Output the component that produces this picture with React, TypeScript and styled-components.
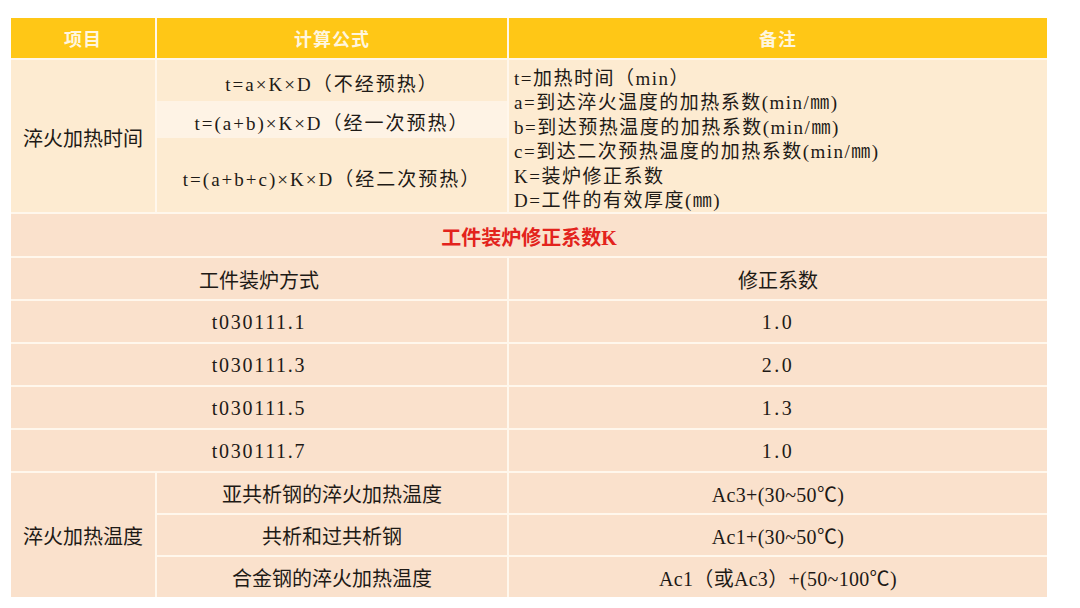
import { Fragment } from "react";
import styled, { createGlobalStyle } from "styled-components";

const GlobalStyle = createGlobalStyle`
  html, body {
    margin: 0;
    padding: 0;
    background: #ffffff;
    overflow: hidden;
  }
  body {
    font-family: "Liberation Serif", "Noto Sans CJK SC", serif;
    color: #1e1a16;
  }
`;

const Page = styled.div`
  width: 1080px;
  height: 608px;
  padding: 18px 33px 0 11px;
  box-sizing: border-box;
`;

const Table = styled.div`
  display: grid;
  grid-template-columns: 144px 350px 1fr;
  grid-template-rows: 40px 152px 42px 41px 41px 41px 41px 41px 40px 40px 40px;
  gap: 2px;
  background: #fff7ec;
`;

const Head = styled.div`
  background: #ffc716;
  color: #fff6df;
  font-weight: 700;
  font-size: 18px;
  display: flex;
  align-items: center;
  justify-content: center;
  letter-spacing: 1px;
`;

const Cell = styled.div<{
  $tone?: "cream" | "peach";
  $span?: string;
  $rows?: string;
  $spacing?: number;
  $pad?: number;
}>`
  background: ${(p) => (p.$tone === "cream" ? "#fdebd1" : "#fae1cc")};
  grid-column: ${(p) => p.$span || "auto"};
  grid-row: ${(p) => p.$rows || "auto"};
  display: flex;
  align-items: center;
  justify-content: center;
  font-size: 20px;
  letter-spacing: ${(p) => p.$spacing ?? 0}px;
  padding-top: ${(p) => p.$pad ?? 2}px;
  box-sizing: border-box;
`;

const Formulas = styled.div`
  background: #fdebd1;
  display: flex;
  flex-direction: column;
`;

const Formula = styled.div<{ $h: number; $light?: boolean }>`
  height: ${(p) => p.$h}px;
  background: ${(p) => (p.$light ? "#fef3e5" : "transparent")};
  display: flex;
  align-items: center;
  justify-content: center;
  font-size: 19px;
  letter-spacing: 2px;
  padding-top: 4px;
  box-sizing: border-box;
`;

const Notes = styled.div`
  background: #fdebd1;
  padding: 7px 0 0 5px;
  font-size: 19px;
  line-height: 24.4px;
  letter-spacing: 1.5px;
  display: flex;
  flex-direction: column;
`;

const Title = styled(Cell)`
  color: #e3231c;
  font-weight: 700;
`;

const kRows = [
  ["t030111.1", "1.0"],
  ["t030111.3", "2.0"],
  ["t030111.5", "1.3"],
  ["t030111.7", "1.0"],
];

const tempRows = [
  ["亚共析钢的淬火加热温度", "Ac3+(30~50℃)"],
  ["共析和过共析钢", "Ac1+(30~50℃)"],
  ["合金钢的淬火加热温度", "Ac1（或Ac3）+(50~100℃)"],
];

const notes = [
  "t=加热时间（min）",
  "a=到达淬火温度的加热系数(min/㎜)",
  "b=到达预热温度的加热系数(min/㎜)",
  "c=到达二次预热温度的加热系数(min/㎜)",
  "K=装炉修正系数",
  "D=工件的有效厚度(㎜)",
];

export default function App() {
  return (
    <>
      <GlobalStyle />
      <Page>
        <Table>
          <Head>项目</Head>
          <Head>计算公式</Head>
          <Head>备注</Head>

          <Cell $tone="cream">淬火加热时间</Cell>
          <Formulas>
            <Formula $h={41}>t=a×K×D（不经预热）</Formula>
            <Formula $h={37} $light>t=(a+b)×K×D（经一次预热）</Formula>
            <Formula $h={74}>t=(a+b+c)×K×D（经二次预热）</Formula>
          </Formulas>
          <Notes>
            {notes.map((n) => (
              <span key={n}>{n}</span>
            ))}
          </Notes>

          <Title $span="1 / 4">工件装炉修正系数K</Title>
          <Cell $span="1 / 3">工件装炉方式</Cell>
          <Cell>修正系数</Cell>
          {kRows.map(([a, b]) => (
            <Fragment key={a}>
              <Cell $span="1 / 3" $spacing={1.7}>{a}</Cell>
              <Cell $spacing={2.5}>{b}</Cell>
            </Fragment>
          ))}

          <Cell $rows="9 / 12" $pad={0}>淬火加热温度</Cell>
          {tempRows.map(([a, b]) => (
            <Fragment key={a}>
              <Cell $span="2 / 3" $pad={0}>{a}</Cell>
              <Cell $span="3 / 4" $pad={0} $spacing={0.3}>{b}</Cell>
            </Fragment>
          ))}
        </Table>
      </Page>
    </>
  );
}
